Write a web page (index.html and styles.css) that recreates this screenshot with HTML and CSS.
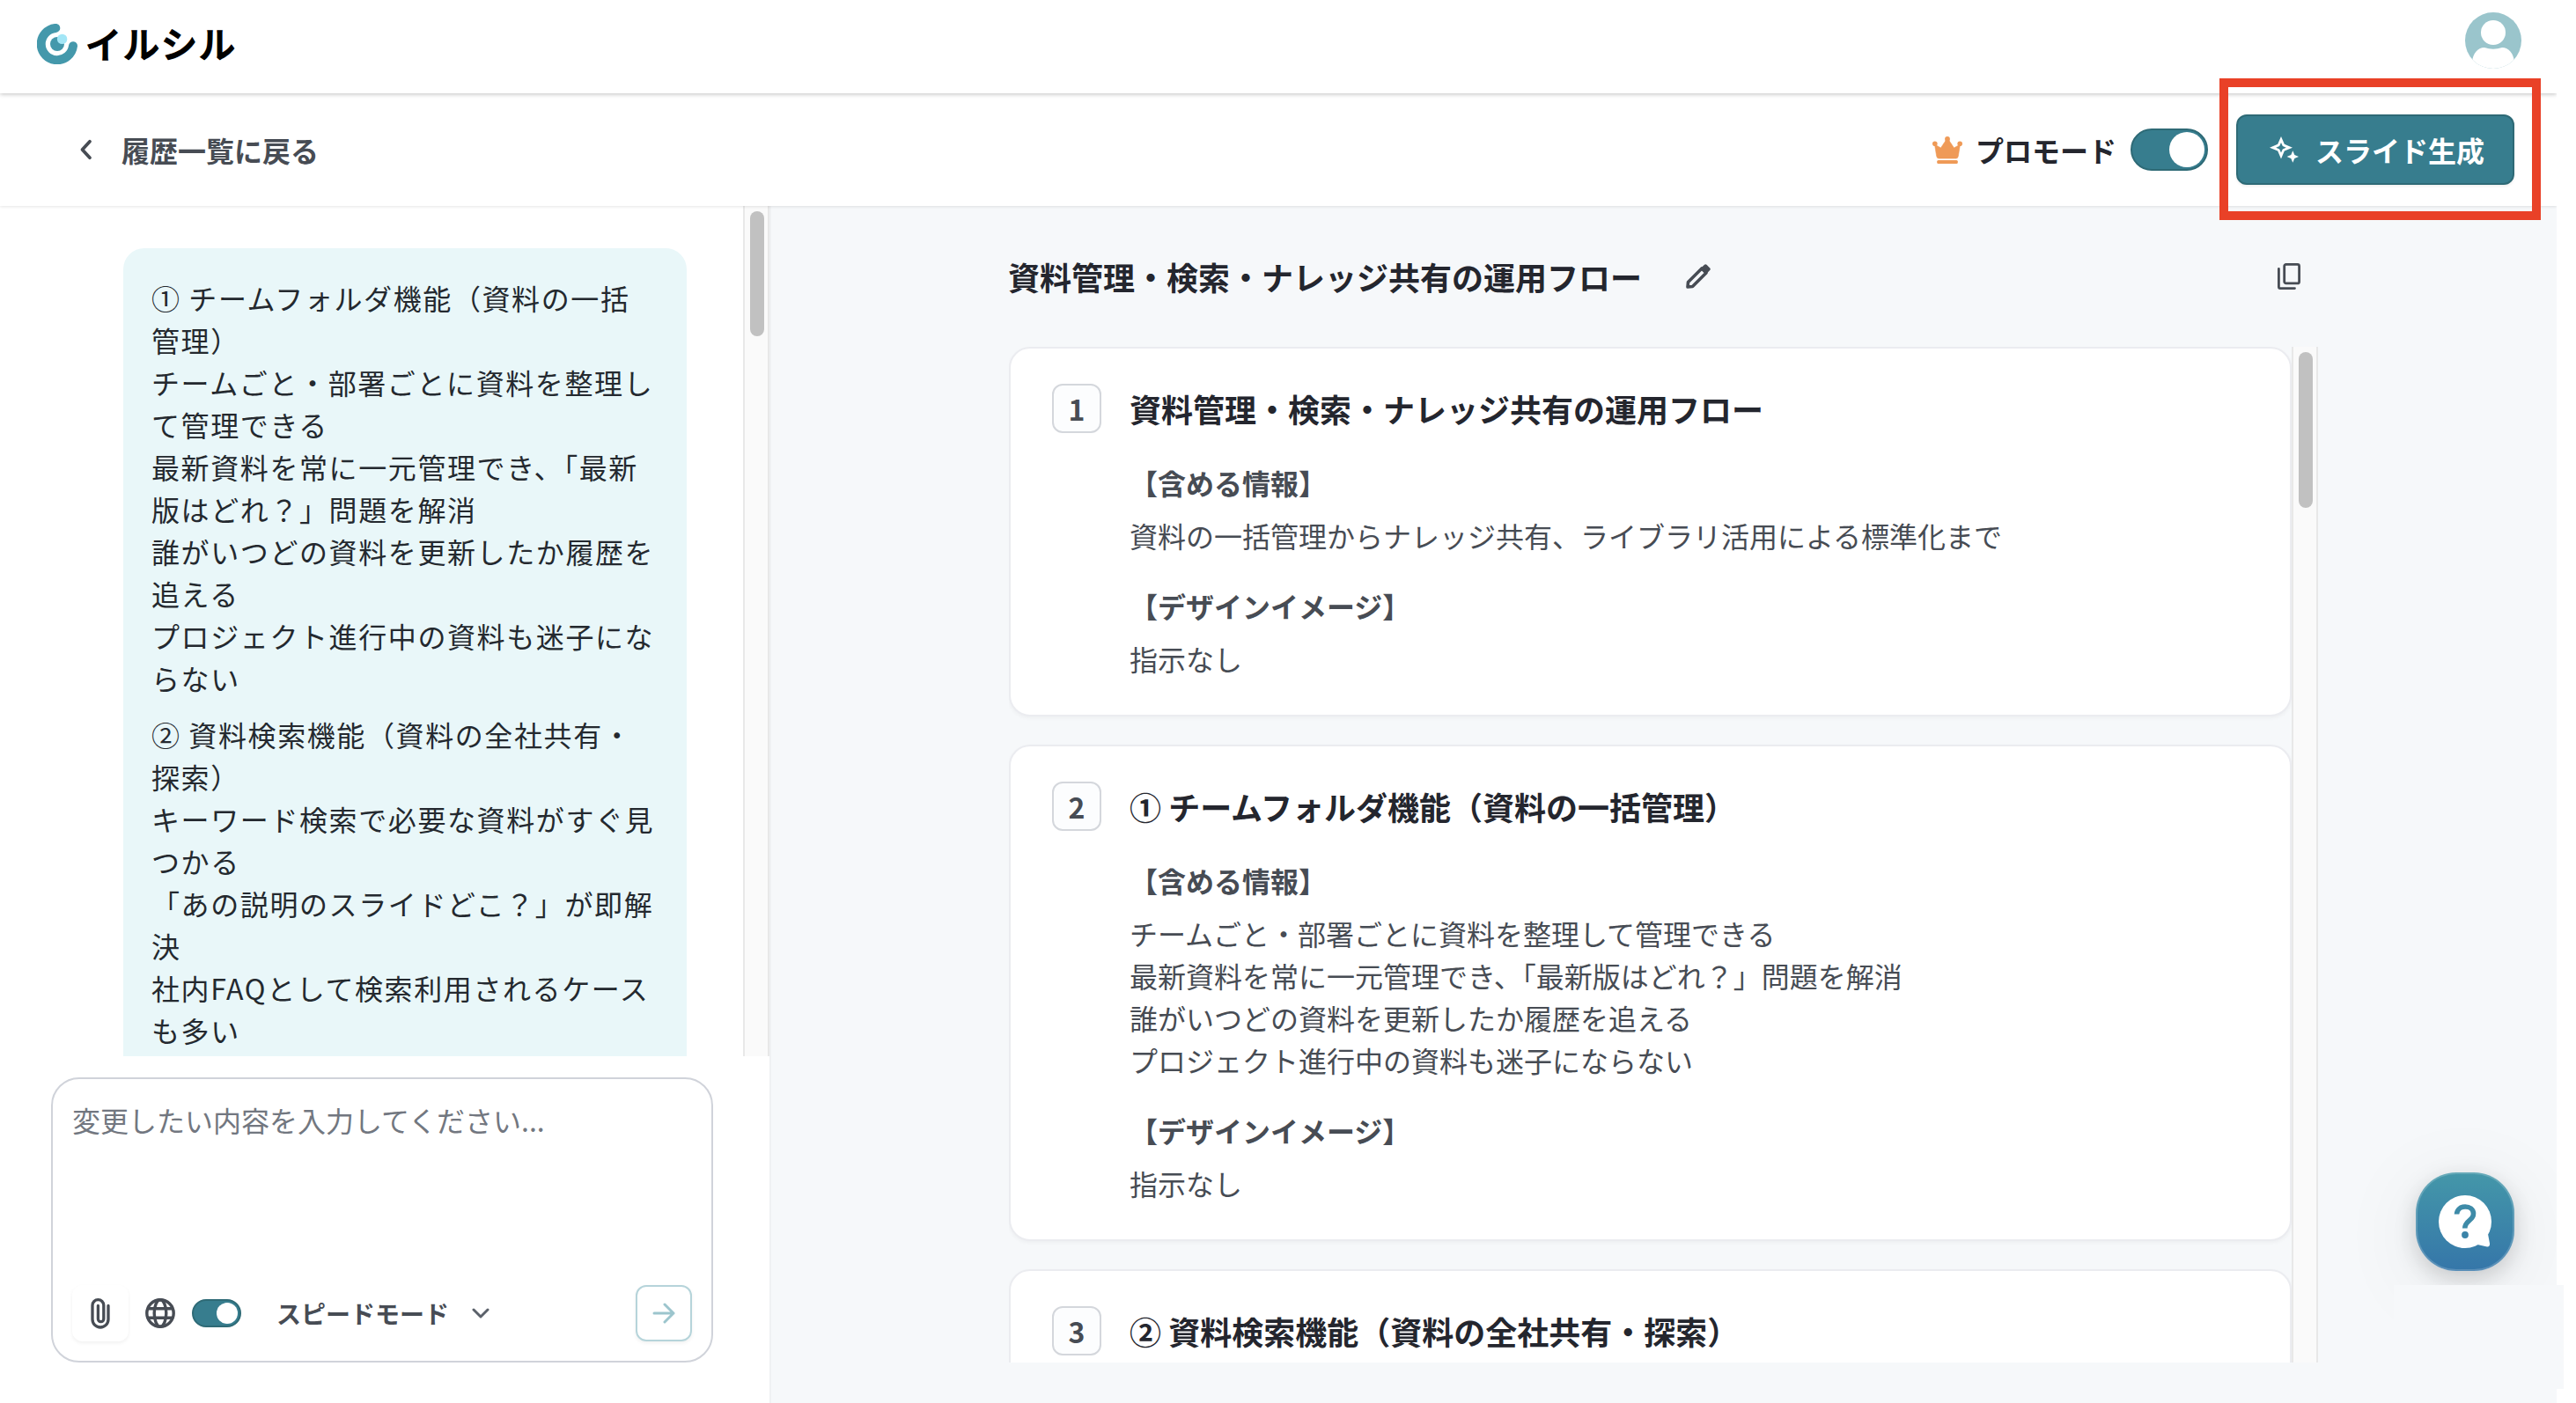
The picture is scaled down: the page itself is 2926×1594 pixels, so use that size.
FILE: index.html
```html
<!DOCTYPE html>
<html lang="ja">
<head>
<meta charset="utf-8">
<title>イルシル</title>
<link rel="stylesheet" href="styles.css">
</head>
<body>
<div class="app">
  <header class="header">
    <div class="logo">
      <svg class="logo-mark" viewBox="0 0 46 46"><path d="M21.3 4.9A18.2 18.2 0 1 0 41 25.2" fill="none" stroke="#4498ab" stroke-width="10" stroke-linecap="round"/><circle cx="23" cy="23" r="8" fill="#4498ab"/><circle cx="28.6" cy="17.4" r="5.7" fill="#a3e6f6"/></svg>
      <span class="logo-text">イルシル</span>
    </div>
    <svg class="avatar" viewBox="0 0 64 64"><defs><clipPath id="av"><circle cx="32" cy="32" r="32"/></clipPath></defs><circle cx="32" cy="32" r="32" fill="#9ac5cc"/><g clip-path="url(#av)" fill="#fff"><circle cx="32" cy="23" r="14"/><path d="M8 64V56C9 47 14 40 22 40Q32 43.5 42 40C50 40 55 47 56 56V64Z"/></g></svg>
  </header>

  <div class="toolbar">
    <div class="back">
      <svg class="back-icon" viewBox="0 0 16 24"><path d="M12 2.8 3.500 12l8.500 9.200" fill="none" stroke="#474c54" stroke-width="3.800" stroke-linecap="round" stroke-linejoin="round"/></svg>
      <span>履歴一覧に戻る</span>
    </div>
    <div class="actions">
      <svg class="crown" viewBox="0 0 34 31"><g fill="#ef9a57"><circle cx="2.800" cy="8.300" r="2.800"/><circle cx="31.200" cy="8.300" r="2.800"/><circle cx="17" cy="2.900" r="2.900"/><path d="M2.500 9 9.500 13 15.500 4h3l6 9L31.500 9 29.300 22.500Q28.800 25 26.800 25H7.200Q5.200 25 4.700 22.500Z" stroke="#ef9a57" stroke-width=".6"/><rect x="5.200" y="27" width="23.600" height="4" rx="1.500"/></g></svg>
      <span class="pro-label">プロモード</span>
      <span class="switch"><span class="knob"></span></span>
      <button class="generate">
        <svg class="sparkle" viewBox="0 0 33 30"><path fill="#fff" fill-rule="evenodd" d="M13 0 16.800 8.800 26 12.700 16.800 16.600 13 25.600 9.200 16.600 0 12.700 9.200 8.800ZM13 7 11.200 11 7.200 12.800 11.200 14.500 13 18.500 14.800 14.500 18.800 12.800 14.800 11Z"/><path d="M26.300 16.300 28.300 21 33 23 28.300 25 26.300 29.700 24.300 25 19.600 23 24.300 21Z" fill="#fff"/></svg>
        <span>スライド生成</span>
      </button>
    </div>
  </div>

  <main class="main">
    <section class="chat">
      <div class="chat-scroll">
        <div class="messages">
          <div class="bubble">
            <p>① チームフォルダ機能（資料の一括<br>管理）<br>チームごと・部署ごとに資料を整理し<br>て管理できる<br>最新資料を常に一元管理でき、「最新<br>版はどれ？」問題を解消<br>誰がいつどの資料を更新したか履歴を<br>追える<br>プロジェクト進行中の資料も迷子にな<br>らない</p>
            <p>② 資料検索機能（資料の全社共有・<br>探索）<br>キーワード検索で必要な資料がすぐ見<br>つかる<br>「あの説明のスライドどこ？」が即解<br>決<br>社内FAQとして検索利用されるケース<br>も多い</p>
          </div>
        </div>
        <div class="track"><div class="thumb thumb-chat"></div></div>
      </div>
      <div class="composer">
        <div class="placeholder">変更したい内容を入力してください...</div>
        <div class="tools">
          <span class="attach"><svg class="clip" viewBox="0 0 24 36"><path d="M21 9.500V25a9 9 0 0 1-18 0V9a6.400 6.400 0 0 1 12.800 0V24.500a3.200 3.200 0 0 1-6.400 0V9.500" fill="none" stroke="#474c54" stroke-width="3.300" stroke-linecap="round"/></svg></span>
          <svg class="globe" viewBox="0 0 34 34"><g fill="none" stroke="#474c54" stroke-width="3.400"><circle cx="17" cy="17" r="15.200"/><ellipse cx="17" cy="17" rx="6.800" ry="15.200"/><path d="M3 11.800H31M3 22.200H31"/></g></svg>
          <span class="switch switch-small"><span class="knob"></span></span>
          <span class="mode">スピードモード</span>
          <svg class="mode-arrow" viewBox="0 0 20 12"><path d="M2 2l8 8 8-8" fill="none" stroke="#5b616a" stroke-width="3" stroke-linecap="round" stroke-linejoin="round"/></svg>
          <span class="send"><svg class="send-icon" viewBox="0 0 26 24"><path d="M2 12H24M14 2 24 12 14 22" fill="none" stroke="#9cc5cd" stroke-width="3" stroke-linecap="round" stroke-linejoin="round"/></svg></span>
        </div>
      </div>
    </section>

    <section class="outline">
      <div class="outline-head">
        <h1>資料管理・検索・ナレッジ共有の運用フロー</h1>
        <svg class="pencil" viewBox="0 0 28 28"><path d="M2 26 2.500 20.500 18 5 23 10 7.500 25.500Z" fill="none" stroke="#474c54" stroke-width="3.600" stroke-linejoin="round"/><path d="M16.500 5 21 .8Q22.300-.3 23.500.8L27.200 4.500Q28.300 5.700 27.200 7L23 11.500Z" fill="#474c54"/></svg>
        <svg class="copy" viewBox="0 0 26 30"><g fill="none" stroke="#474c54" stroke-width="2.800" stroke-linejoin="round"><rect x="7.700" y="1.400" width="16.900" height="21.500" rx="2"/><path d="M1.400 6.500V27Q1.400 28.600 3 28.600H19.500" stroke-linecap="round"/></g></svg>
      </div>
      <div class="outline-body">
        <div class="cards">
          <article class="card">
            <span class="num">1</span>
            <div class="content">
              <h2>資料管理・検索・ナレッジ共有の運用フロー</h2>
              <h3>【含める情報】</h3>
              <p>資料の一括管理からナレッジ共有、ライブラリ活用による標準化まで</p>
              <h3>【デザインイメージ】</h3>
              <p>指示なし</p>
            </div>
          </article>
          <article class="card">
            <span class="num">2</span>
            <div class="content">
              <h2>① チームフォルダ機能（資料の一括管理）</h2>
              <h3>【含める情報】</h3>
              <p>チームごと・部署ごとに資料を整理して管理できる<br>最新資料を常に一元管理でき、「最新版はどれ？」問題を解消<br>誰がいつどの資料を更新したか履歴を追える<br>プロジェクト進行中の資料も迷子にならない</p>
              <h3>【デザインイメージ】</h3>
              <p>指示なし</p>
            </div>
          </article>
          <article class="card">
            <span class="num">3</span>
            <div class="content">
              <h2>② 資料検索機能（資料の全社共有・探索）</h2>
            </div>
          </article>
        </div>
        <div class="track"><div class="thumb thumb-outline"></div></div>
      </div>
    </section>
  </main>
</div>

<div class="help">
  <svg viewBox="0 0 112 112"><circle cx="56" cy="56" r="30" fill="#fff"/><path d="M82 70 84 80.500Q84.500 85 80 84.300L70 82Z" fill="#fff"/><path d="M46.500 47.500C47 36 65.500 36.500 65.500 47 65.500 55 55.800 54.500 55.800 63.500" fill="none" stroke="#3e8ba8" stroke-width="5.600"/><circle cx="56" cy="71" r="3.900" fill="#3b84a8"/></svg>
</div>
<div class="patch"></div>
<div class="highlight"></div>
</body>
</html>
```
FILE: styles.css
```css
* { box-sizing: border-box; }
body {
  margin: 0;
  width: 2926px;
  height: 1594px;
  overflow: hidden;
  position: relative;
  background: #fff;
  font-family: "Noto Sans CJK JP", "Noto Sans", sans-serif;
  font-size: 32px;
  line-height: 48px;
  color: #24292f;
}
h1, h2, h3, p { margin: 0; }
svg { display: block; flex: none; }
.app {
  width: 2904px;
  height: 1594px;
  display: flex;
  flex-direction: column;
  overflow: hidden;
}

.header {
  height: 106px;
  flex: none;
  display: flex;
  justify-content: space-between;
  align-items: flex-start;
  padding: 14px 40px 0 42px;
  background: #fff;
  box-shadow: 0 1px 5px rgba(0, 0, 0, .25);
  z-index: 2;
}
.logo { display: flex; align-items: center; height: 72px; }
.logo-mark { width: 46px; height: 46px; }
.logo-text {
  margin: -5px 0 0 9px;
  font-size: 41px;
  font-weight: 500;
  letter-spacing: 2px;
  color: #000;
  -webkit-text-stroke: 1.600px #000;
  stroke-linejoin: round;
}
.avatar { width: 64px; height: 64px; }

.toolbar {
  height: 128px;
  flex: none;
  display: flex;
  justify-content: space-between;
  align-items: center;
  padding: 0 48px 0 90px;
  background: #fff;
  box-shadow: 0 1px 3px rgba(0, 0, 0, .1);
  z-index: 1;
  font-weight: 700;
}
.back { display: flex; align-items: center; color: #474c54; }
.back-icon { width: 16px; height: 24px; margin-right: 32px; }
.actions { display: flex; align-items: center; }
.crown { width: 34px; height: 31px; margin-right: 15px; }
.pro-label { margin-right: 16px; color: #24262e; }
.switch {
  width: 88px;
  height: 48px;
  display: flex;
  justify-content: flex-end;
  align-items: center;
  padding-right: 2px;
  border: 2px solid #2e6a76;
  border-radius: 24px;
  background: #377d8e;
}
.knob { width: 40px; height: 40px; border-radius: 50%; background: #fff; }
.generate {
  width: 316px;
  height: 80px;
  margin-left: 32px;
  display: flex;
  align-items: center;
  padding: 0 0 0 36px;
  border: 2px solid #2e6a76;
  border-radius: 12px;
  background: #377d8e;
  color: #fff;
  font: inherit;
  box-shadow: 0 2px 3px rgba(0, 0, 0, .06);
}
.sparkle { width: 33px; height: 30px; margin-right: 19px; }

.main { flex: 1; min-height: 0; display: flex; }
.chat {
  width: 874px;
  flex: none;
  display: flex;
  flex-direction: column;
  background: #fff;
}
.chat-scroll { height: 966px; display: flex; overflow: hidden; }
.messages { flex: 1; padding: 48px 64px 0 140px; }
.bubble {
  width: 640px;
  height: 1000px;
  padding: 32px;
  border-radius: 24px;
  background: #e9f7f9;
  letter-spacing: 1.600px;
  white-space: nowrap;
}
.bubble p + p { margin-top: 16px; }
.track {
  width: 30px;
  flex: none;
  padding: 6px 0 0 6px;
  border: solid #e8e8e8;
  border-width: 0 2px;
  background: #fafafa;
}
.thumb { width: 16px; border-radius: 8px; background: #c1c1c1; }
.thumb-chat { height: 142px; }
.thumb-outline { height: 177px; }

.composer {
  width: 752px;
  height: 324px;
  margin: 24px 0 0 58px;
  display: flex;
  flex-direction: column;
  justify-content: space-between;
  padding: 22px 22px 22px;
  border: 2px solid #d0d3da;
  border-radius: 32px;
}
.placeholder { color: #727780; }
.tools { display: flex; align-items: center; height: 64px; }
.attach {
  width: 64px;
  height: 64px;
  display: flex;
  align-items: center;
  justify-content: center;
  border-radius: 12px;
  box-shadow: 0 2px 4px rgba(0, 0, 0, .06);
}
.clip { width: 24px; height: 36px; }
.globe { width: 34px; height: 34px; margin: 0 19px; }
.switch-small { width: 56px; height: 32px; }
.switch-small .knob { width: 24px; height: 24px; }
.mode {
  margin-left: 40px;
  font-size: 28px;
  font-weight: 700;
  color: #474c54;
}
.mode-arrow { width: 20px; height: 12px; margin-left: 26px; }
.send {
  width: 64px;
  height: 64px;
  margin-left: auto;
  display: flex;
  align-items: center;
  justify-content: center;
  border: 2px solid #b6d4da;
  border-radius: 12px;
  box-shadow: 0 2px 4px rgba(0, 0, 0, .06);
}
.send-icon { width: 26px; height: 24px; }

.outline {
  flex: 1;
  min-width: 0;
  padding: 0 271px 0 270px;
  border-left: 2px solid #eff1f3;
  background: #f6f8fa;
}
.outline-head { height: 160px; display: flex; align-items: center; color: #24262e; }
.outline-head h1 { font-size: 36px; line-height: 54px; font-weight: 700; margin-left: -1px; }
.pencil { width: 28px; height: 28px; margin-left: 50px; }
.copy { width: 26px; height: 30px; margin: 0 20px 0 auto; }
.outline-body { height: 1154px; display: flex; overflow: hidden; }
.cards { flex: 1; display: flex; flex-direction: column; gap: 32px; }
.card {
  flex: none;
  display: flex;
  gap: 32px;
  padding: 40px 47px;
  border: 2px solid #ebecf0;
  border-radius: 24px;
  background: #fff;
  box-shadow: 0 2px 4px rgba(0, 0, 0, .04);
}
.num {
  width: 56px;
  height: 56px;
  flex: none;
  display: flex;
  align-items: center;
  justify-content: center;
  border: 2px solid #d4d7dc;
  border-radius: 12px;
  background: #fcfdfe;
  font-weight: 700;
  color: #474c54;
}
.content { color: #474c54; white-space: nowrap; }
.content h2 {
  margin-bottom: 32px;
  font-size: 36px;
  line-height: 56px;
  font-weight: 700;
  color: #24262e;
}
.content h3 { margin-bottom: 12px; font-size: 32px; font-weight: 700; }
.content p + h3 { margin-top: 32px; }

.help {
  position: absolute;
  left: 2744px;
  top: 1332px;
  width: 112px;
  height: 112px;
  border-radius: 46px;
  background: linear-gradient(#4497a9, #3576a9);
  box-shadow: inset 0 0 0 2px rgba(255, 255, 255, .18), 0 8px 24px rgba(0, 0, 0, .16), 0 16px 96px rgba(0, 0, 0, .08);
  clip-path: inset(-120px -48px -200px -160px);
}
.patch {
  position: absolute;
  left: 2719px;
  top: 1460px;
  width: 193px;
  height: 118px;
  background: #f6f8fa;
}
.highlight {
  position: absolute;
  left: 2521px;
  top: 89px;
  width: 365px;
  height: 161px;
  border: 10px solid #e94127;
  z-index: 3;
}
```
